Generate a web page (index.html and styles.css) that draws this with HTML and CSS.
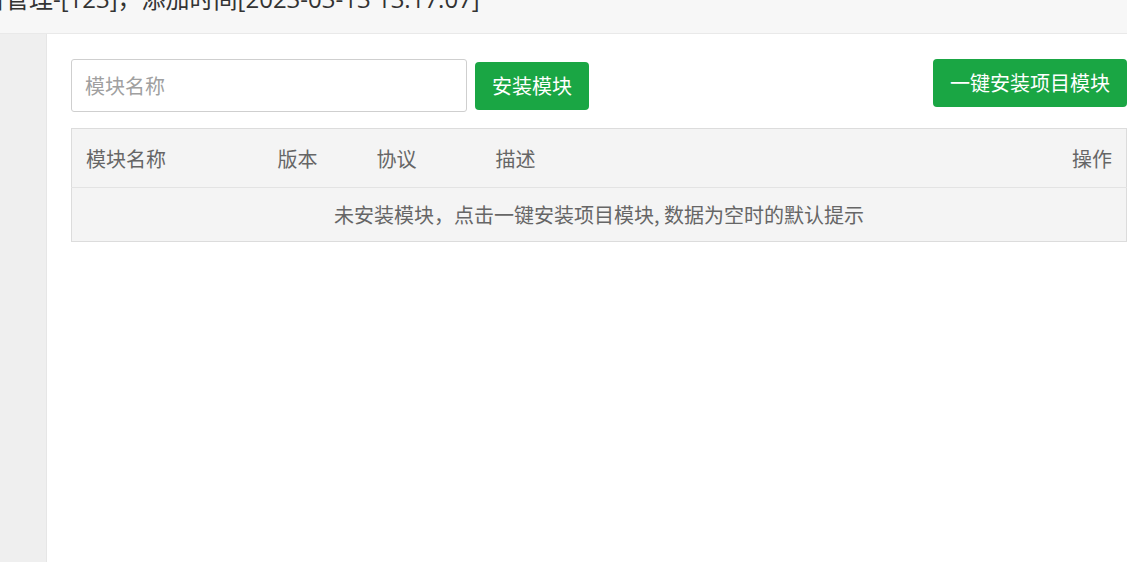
FILE: index.html
```html
<!DOCTYPE html>
<html lang="zh">
<head>
<meta charset="utf-8">
<title>模块管理</title>
<link rel="stylesheet" href="styles.css">
</head>
<body>
<div class="topbar">
  <div class="title">项目管理-[123]，添加时间[2023-03-13 13:17:07]</div>
</div>
<div class="layout">
  <aside class="sidebar"></aside>
  <main class="main">
    <div class="toolbar">
      <div class="search">
        <input class="input" type="text" placeholder="模块名称">
        <button class="btn">安装模块</button>
      </div>
      <button class="btn btn-wide">一键安装项目模块</button>
    </div>
    <table class="table">
      <thead>
        <tr>
          <th class="c-name">模块名称</th>
          <th class="c-ver">版本</th>
          <th class="c-lic">协议</th>
          <th class="c-desc">描述</th>
          <th class="c-op">操作</th>
        </tr>
      </thead>
      <tbody>
        <tr>
          <td class="empty" colspan="5">未安装模块，点击一键安装项目模块, 数据为空时的默认提示</td>
        </tr>
      </tbody>
    </table>
  </main>
</div>
</body>
</html>
```
FILE: styles.css
```css
* { box-sizing: border-box; }
html, body {
  margin: 0;
  padding: 0;
  background: #ffffff;
  font-family: "Noto Sans CJK SC", "Open Sans", "Noto Sans", sans-serif;
  overflow: hidden;
  height: 566px;
}
.topbar {
  height: 34px;
  background: #f7f7f7;
  border-bottom: 1px solid #e9e9e9;
  overflow: hidden;
}
.title {
  margin-top: -13px;
  margin-left: -43px;
  font-family: "Open Sans", "Noto Sans CJK SC", sans-serif;
  font-size: 24px;
  line-height: 24px;
  color: #333;
  white-space: nowrap;
}
.layout {
  display: flex;
  height: 532px;
}
.sidebar {
  width: 47px;
  flex: none;
  height: 528px;
  background: #efefef;
  border-right: 1px solid #e6e6e6;
}
.main {
  flex: 1;
  padding: 25px 0 0 24px;
}
.toolbar {
  display: flex;
  justify-content: space-between;
  align-items: flex-start;
}
.search {
  display: flex;
  align-items: center;
  gap: 8px;
}
.input {
  width: 396px;
  height: 53px;
  border: 1px solid #cfcfcf;
  border-radius: 3px;
  padding: 0 13px;
  font-family: inherit;
  font-size: 20px;
  color: #333;
  outline: none;
}
.input::placeholder { color: #a0a0a0; }
.btn {
  height: 48px;
  padding: 0 17px;
  background: #1aa644;
  color: #fff;
  border: 0;
  border-radius: 4px;
  font-family: inherit;
  font-size: 20px;
  line-height: 48px;
  cursor: pointer;
}
.btn-wide { padding: 0 17px; }
.table {
  margin-top: 16px;
  width: 100%;
  border-collapse: collapse;
  background: #f4f4f4;
  border: 1px solid #dcdcdc;
  font-size: 20px;
  color: #666;
}
.table th {
  font-weight: normal;
  text-align: left;
  height: 59px;
  padding: 0 14px;
  border-bottom: 1px solid #e3e3e3;
}
.c-name { width: 192px; }
.c-ver { width: 99px; }
.c-lic { width: 119px; }
.table th.c-op { text-align: right; }
.empty {
  height: 54px;
  text-align: center;
  padding: 0;
}
```
